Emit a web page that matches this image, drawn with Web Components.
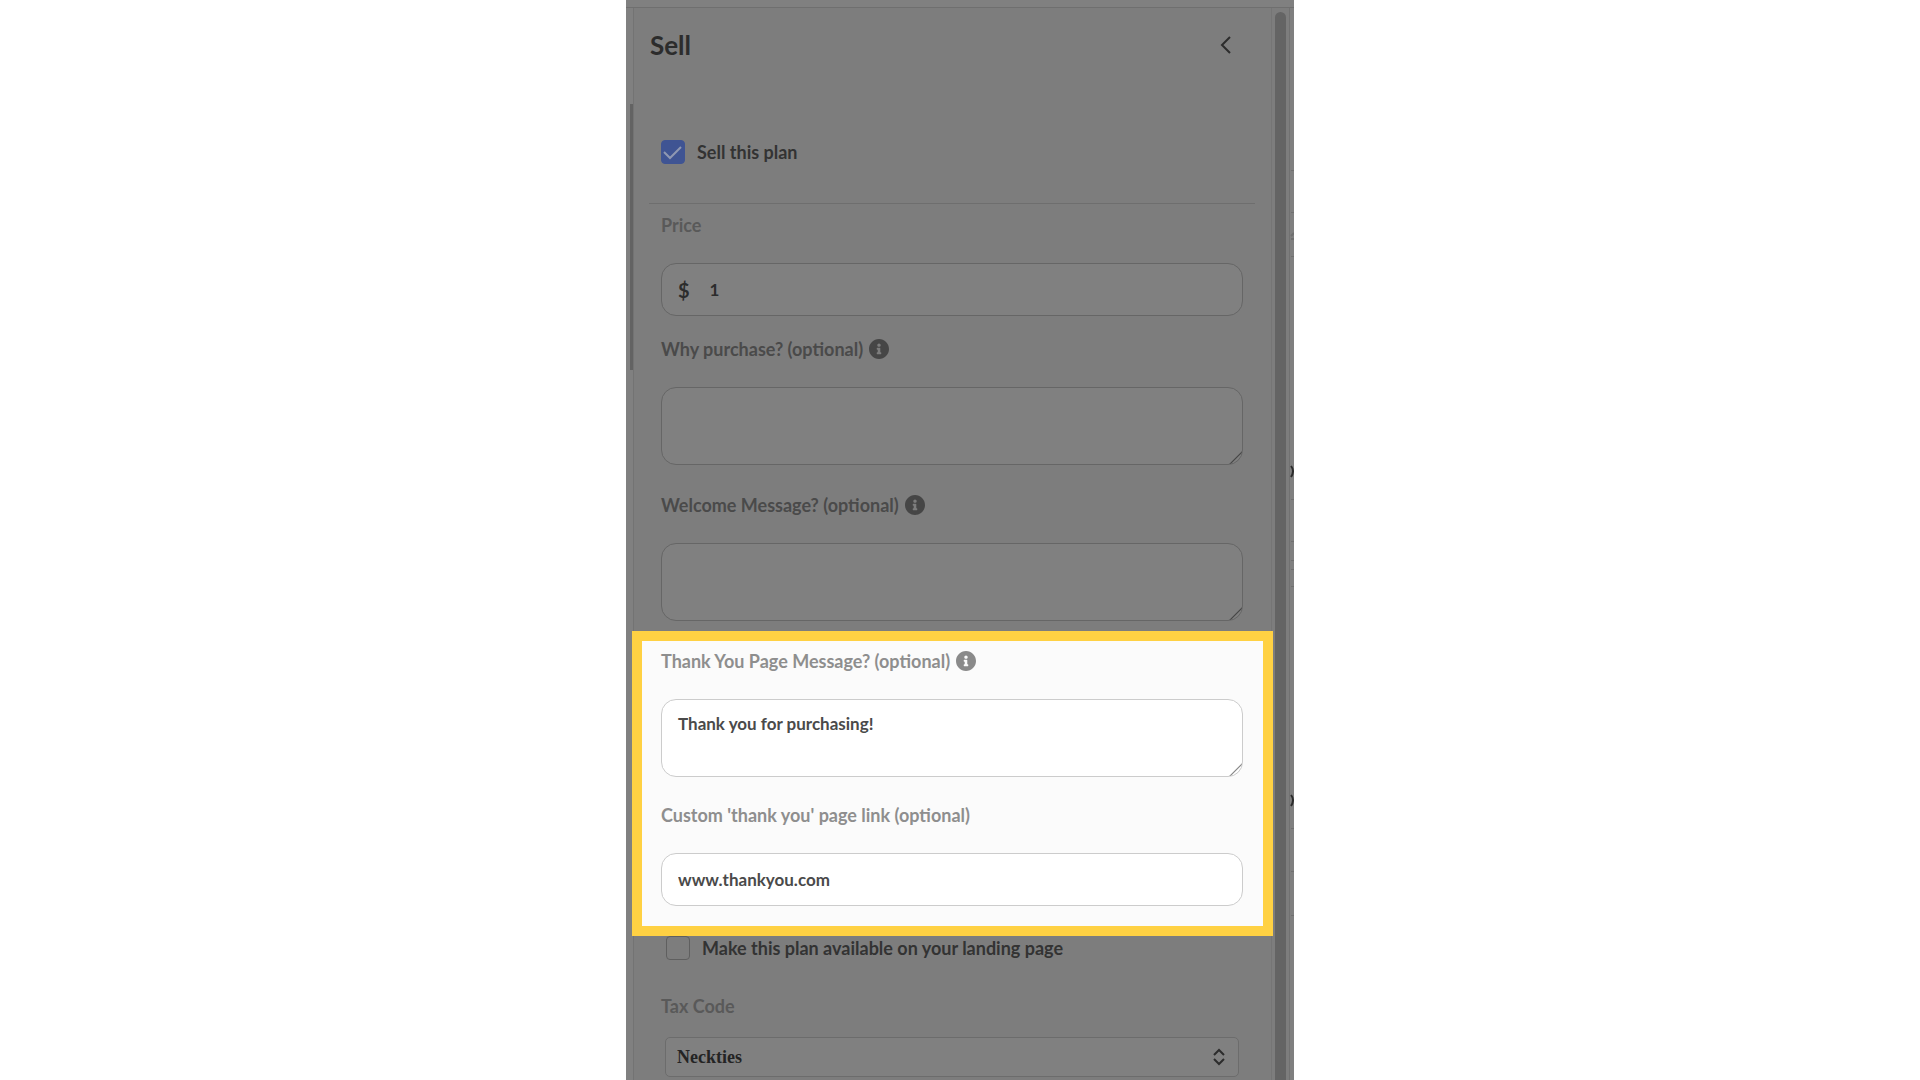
<!DOCTYPE html>
<html lang="en">
<head>
<meta charset="utf-8">
<title>Sell</title>
<style>
body
{
    margin: 0;
    background: white;
    font-family: Lato, "Open Sans", sans-serif;
    overflow: hidden;
}
</style>
</head>
<body>

<plan-editor>
    <sell-panel heading="Sell">
        <check-row checked>Sell this plan</check-row>
        <hr>
        <plan-field class="price" label="Price" prefix="$" value="1" plain></plan-field>
        <plan-field class="why" label="Why purchase? (optional)" multiline info></plan-field>
        <plan-field class="welcome" label="Welcome Message? (optional)" multiline info></plan-field>
        <spot-light>
            <plan-field label="Thank You Page Message? (optional)" value="Thank you for purchasing!" multiline info></plan-field>
            <plan-field label="Custom 'thank you' page link (optional)" value="www.thankyou.com"></plan-field>
        </spot-light>
        <check-row class="landing">Make this plan available on your landing page</check-row>
        <plan-select label="Tax Code" value="Neckties"></plan-select>
    </sell-panel>
</plan-editor>

<script>
// the whole editor column: top bar, left edge, panel, scrollbar and the edge of the next pane
class PlanEditor extends HTMLElement
{
    constructor()
    {
        super();
        var shadow = this.attachShadow({mode: "open"});
        shadow.innerHTML =
        `<style>
        :host
        {
            --back: #7d7d7d;
            --field: #808080;
            --line: #666666;
            --label: #4a4a4a;
            --faint: #595959;
            --text: #2c2c2c;
            --icon: #464646;
            --grip: #474747;

            display: flex;
            flex-direction: column;
            box-sizing: border-box;
            max-width: 668px;
            min-height: 100vh;
            margin: 0 auto;
            background: var(--back);
        }
        .top
        {
            height: 7px;
            background: #808080;
            border-bottom: 1px solid #6f6f6f;
        }
        .columns
        {
            flex: 1;
            display: grid;
            grid-template-columns: 8px minmax(0, 1fr) 19px 4px;
        }
        .left
        {
            display: flex;
            justify-content: flex-end;
            background: #808080;
            border-right: 1px solid #737373;
        }
        .left div
        {
            width: 3px;
            height: 266px;
            margin-top: 96px;
            background: #636363;
        }
        .track
        {
            display: flex;
            justify-content: center;
            padding-top: 4px;
            border-left: 1px solid #757575;
            border-right: 1px solid #717171;
        }
        .track div
        {
            width: 11px;
            border-radius: 6px 6px 0 0;
            background: #646464;
        }
        .next
        {
            overflow: hidden;
            background: #7f7f7f;
        }
        svg
        {
            display: block;
        }
        </style>
        <div class="top"></div>
        <div class="columns">
            <div class="left"><div></div></div>
            <slot></slot>
            <div class="track"><div></div></div>
            <div class="next">
                <svg width="4" height="920" fill="none" stroke="#6f6f6f">
                    <path d="M1 162.500h3M1 204.500h3M1 248.500h3M1 491.500h3M1 533.500h3M1 552.500h3M1 561.500h3M1 578.500h3M1 820.500h3M1 863.500h3M1 907.500h3"/>
                    <path d="M1 228l3-3M1 231h3" stroke-width="2"/>
                    <path d="M1 458q4 5 0 11M1 787q4 5 0 11" stroke="#2c2c2c" stroke-width="2"/>
                </svg>
            </div>
        </div>`;
    }
}

class SellPanel extends HTMLElement
{
    connectedCallback()
    {
        var shadow = this.attachShadow({mode: "open"});
        shadow.innerHTML =
        `<style>
        :host
        {
            display: block;
            padding: 16px 16px 0;
        }
        header
        {
            display: flex;
            justify-content: space-between;
            align-items: center;
            height: 42px;
            padding-right: 23px;
            margin-bottom: 66px;
        }
        h1
        {
            margin: 0;
            font-size: 26px;
            line-height: 32px;
            color: var(--text);
        }
        button
        {
            display: flex;
            padding: 0;
            border: 0;
            background: none;
            color: var(--text);
        }
        .body
        {
            padding: 0 12px 0 11px;
        }
        ::slotted(hr)
        {
            height: 1px;
            margin: 39px -12px 7px;
            border: 0;
            background: #6e6e6e;
        }
        ::slotted(check-row)
        {
            padding-top: 8px;
        }
        ::slotted(.landing)
        {
            padding: 0 5px;
        }
        ::slotted(.why)
        {
            margin-top: 19px;
        }
        ::slotted(.welcome)
        {
            margin-top: 26px;
        }
        ::slotted(spot-light)
        {
            margin: 10px -30px 0 -29px;
        }
        ::slotted(plan-select)
        {
            margin-top: 32px;
        }
        </style>
        <header>
            <h1></h1>
            <button aria-label="Collapse">
                <svg width="12" height="20" viewBox="0 0 12 20" fill="none" stroke="currentColor" stroke-width="2"><path d="M10 2L2 10l8 8"/></svg>
            </button>
        </header>
        <div class="body"><slot></slot></div>`;
        shadow.querySelector("h1").textContent = this.getAttribute("heading");
    }
}

// bright box with the yellow frame, its fields get the undimmed colours
class SpotLight extends HTMLElement
{
    constructor()
    {
        super();
        var shadow = this.attachShadow({mode: "open"});
        shadow.innerHTML =
        `<style>
        :host
        {
            --field: #ffffff;
            --line: #cccccc;
            --label: #8e8e8e;
            --text: #4a4a4a;
            --icon: #8a8a8a;
            --grip: #8a8a8a;

            position: relative;
            display: flex;
            flex-direction: column;
            gap: 24px;
            padding: 6px 20px 20px 19px;
            border: 10px solid #ffd143;
            background: #fbfbfb;
        }
        </style>
        <slot></slot>`;
    }
}

class CheckRow extends HTMLElement
{
    connectedCallback()
    {
        var shadow = this.attachShadow({mode: "open"});
        shadow.innerHTML =
        `<style>
        :host
        {
            display: block;
        }
        label
        {
            display: flex;
            align-items: center;
            gap: 12px;
            font-size: 18px;
            font-weight: bold;
            line-height: 24px;
            color: #333333;
        }
        span
        {
            display: grid;
        }
        input, svg
        {
            grid-area: 1 / 1;
        }
        input
        {
            appearance: none;
            width: 24px;
            height: 24px;
            margin: 0;
            border: 1px solid #5f5f5f;
            border-radius: 4px;
        }
        input:checked
        {
            border-color: #3f5493;
            background: #3f5493;
        }
        svg
        {
            display: none;
            pointer-events: none;
        }
        input:checked + svg
        {
            display: block;
        }
        </style>
        <label>
            <span>
                <input type="checkbox">
                <svg width="24" height="24" viewBox="0 0 24 24" fill="none" stroke="#8f98b2" stroke-width="2"><path d="M3 12l6 6L20 7"/></svg>
            </span>
            <slot></slot>
        </label>`;
        shadow.querySelector("input").checked = this.hasAttribute("checked");
    }
}

class PlanField extends HTMLElement
{
    connectedCallback()
    {
        var control = this.hasAttribute("multiline")
            ? `<textarea id="control"></textarea>`
            : `<input id="control" type="text">`;
        var info = `<svg width="20" height="20" viewBox="8 8 496 496" fill="currentColor"><path d="M256 8C119.043 8 8 119.083 8 256c0 136.997 111.043 248 248 248s248-111.003 248-248C504 119.083 392.957 8 256 8zm0 110c23.196 0 42 18.804 42 42s-18.804 42-42 42-42-18.804-42-42 18.804-42 42-42zm56 254c0 6.627-5.373 12-12 12h-88c-6.627 0-12-5.373-12-12v-24c0-6.627 5.373-12 12-12h12v-64h-12c-6.627 0-12-5.373-12-12v-24c0-6.627 5.373-12 12-12h64c6.627 0 12 5.373 12 12v100h12c6.627 0 12 5.373 12 12v24z"/></svg>`;

        var shadow = this.attachShadow({mode: "open"});
        shadow.innerHTML =
        `<style>
        :host
        {
            display: block;
        }
        .caption
        {
            display: flex;
            align-items: center;
            gap: 6px;
            height: 28px;
            margin-bottom: 24px;
            font-size: 18px;
            font-weight: bold;
            color: var(--label);
        }
        :host([plain]) .caption
        {
            color: var(--faint);
        }
        svg
        {
            color: var(--icon);
        }
        .box
        {
            display: flex;
            align-items: center;
            box-sizing: border-box;
            border: 1px solid var(--line);
            border-radius: 15px;
            background: var(--field);
            overflow: hidden;
            font-size: 17px;
            color: var(--text);
        }
        .prefix
        {
            padding: 0 4px 0 16px;
            font-size: 20px;
            font-weight: bold;
        }
        .prefix:empty
        {
            display: none;
        }
        input, textarea
        {
            flex: 1;
            min-width: 0;
            box-sizing: border-box;
            padding: 0 16px;
            border: 0;
            outline: 0;
            background: none;
            font: inherit;
            font-weight: bold;
            color: inherit;
        }
        input
        {
            height: 51px;
        }
        textarea
        {
            height: 76px;
            padding: 12px 16px;
            line-height: 24px;
            resize: vertical;
        }
        textarea::-webkit-resizer
        {
            background: linear-gradient(135deg, transparent 56%, var(--grip) 58% 62%, transparent 64% 73%, var(--grip) 75% 79%, transparent 81%);
        }
        </style>
        <div class="caption"><label for="control"></label>${this.hasAttribute("info") ? info : ""}</div>
        <div class="box"><span class="prefix"></span>${control}</div>`;

        shadow.querySelector("label").textContent = this.getAttribute("label");
        shadow.querySelector(".prefix").textContent = this.getAttribute("prefix") || "";
        shadow.querySelector("#control").value = this.getAttribute("value") || "";
    }
}

class PlanSelect extends HTMLElement
{
    connectedCallback()
    {
        var shadow = this.attachShadow({mode: "open"});
        shadow.innerHTML =
        `<style>
        :host
        {
            display: block;
        }
        label
        {
            display: block;
            margin-bottom: 17px;
            font-size: 18px;
            font-weight: bold;
            line-height: 28px;
            color: var(--faint);
        }
        .box
        {
            display: grid;
            align-items: center;
            margin: 0 4px;
        }
        select, svg
        {
            grid-area: 1 / 1;
        }
        select
        {
            appearance: none;
            width: 100%;
            height: 40px;
            padding: 0 11px;
            border: 1px solid #6c6c6c;
            border-radius: 5px;
            background: var(--field);
            font: bold 18px "Liberation Serif", serif;
            color: #242424;
        }
        svg
        {
            justify-self: end;
            margin-right: 14px;
            pointer-events: none;
        }
        </style>
        <label for="control"></label>
        <div class="box">
            <select id="control"><option></option></select>
            <svg width="12" height="18" viewBox="0 0 12 18" fill="none" stroke="#2c2c2c" stroke-width="2"><path d="M1 7l5-5 5 5M1 11l5 5 5-5"/></svg>
        </div>`;
        shadow.querySelector("label").textContent = this.getAttribute("label");
        shadow.querySelector("option").textContent = this.getAttribute("value");
    }
}

customElements.define("plan-editor", PlanEditor);
customElements.define("sell-panel", SellPanel);
customElements.define("spot-light", SpotLight);
customElements.define("check-row", CheckRow);
customElements.define("plan-field", PlanField);
customElements.define("plan-select", PlanSelect);
</script>
</body>
</html>
